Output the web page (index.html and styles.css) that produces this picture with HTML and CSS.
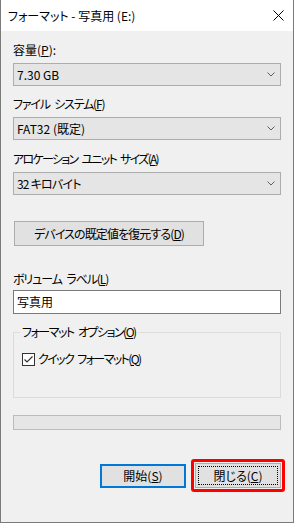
FILE: index.html
```html
<!DOCTYPE html>
<html lang="ja">
<head>
  <meta charset="UTF-8" />
  <title>フォーマット - 写真用 (E:)</title>
  <link rel="stylesheet" href="styles.css">
</head>
<body>
  <div class="window">
    <div class="titlebar">
      <span class="title">フォーマット - 写真用 (E:)</span>
      <svg class="close" width="11" height="11" viewBox="0 0 11 11">
        <path d="M0.5 0.5 L10.5 10.5 M10.5 0.5 L0.5 10.5" stroke="#000" stroke-width="1" fill="none" />
      </svg>
    </div>

    <div class="content">
      <div class="label l1">容量(<u>P</u>):</div>
      <div class="combo">
        <span>7.30 GB</span>
        <svg width="8" height="5" viewBox="0 0 8 5"><polyline points="0.5,0.5 4,4 7.5,0.5" fill="none" stroke="#606060" /></svg>
      </div>

      <div class="label l2">ファイル システム(<u>F</u>)</div>
      <div class="combo">
        <span>FAT32 (既定)</span>
        <svg width="8" height="5" viewBox="0 0 8 5"><polyline points="0.5,0.5 4,4 7.5,0.5" fill="none" stroke="#606060" /></svg>
      </div>

      <div class="label l3">アロケーション ユニット サイズ(<u>A</u>)</div>
      <div class="combo">
        <span class="kana">32 キロバイト</span>
        <svg width="8" height="5" viewBox="0 0 8 5"><polyline points="0.5,0.5 4,4 7.5,0.5" fill="none" stroke="#606060" /></svg>
      </div>

      <div class="btn restore">デバイスの既定値を復元する(<u>D</u>)</div>

      <div class="label l4">ボリューム ラベル(<u>L</u>)</div>
      <div class="textbox">写真用</div>

      <fieldset class="group">
        <legend>フォーマット オプション(<u>O</u>)</legend>
        <div class="check-row">
          <svg class="checkbox" width="13" height="13" viewBox="0 0 13 13">
            <rect x="0.5" y="0.5" width="12" height="12" fill="#fff" stroke="#333" />
            <polyline points="2.5,6.5 5,9 10.5,3.5" fill="none" stroke="#333" stroke-width="1.2" />
          </svg>
          <span class="check-label">クイック フォーマット(<u>Q</u>)</span>
        </div>
      </fieldset>

      <div class="progress"></div>

      <div class="actions">
        <div class="btn default">開始(<u>S</u>)</div>
        <div class="highlight">
          <div class="btn focused"><span class="focus-rect">閉じる(<u>C</u>)</span></div>
        </div>
      </div>
    </div>
  </div>
</body>
</html>
```

FILE: styles.css
```css
* {
  box-sizing: border-box;
}

body {
  margin: 0;
  font-family: "Noto Sans CJK JP", "Noto Sans", sans-serif;
  font-size: 12px;
  font-feature-settings: "palt";
  color: #000;
  background: #f0f0f0;
}

.window {
  width: 294px;
  height: 523px;
  border: 1px solid #7a7a7a;
  border-top: none;
  background: #f0f0f0;
  display: flex;
  flex-direction: column;
}

/* Barre de titre */
.titlebar {
  height: 31px;
  background: #fff;
  display: flex;
  align-items: center;
  justify-content: space-between;
  padding: 0 9px 0 7px;
}

.title {
  line-height: 16px;
}

.close {
  margin-top: -1px;
}

/* Contenu */
.content {
  padding: 0 12px;
  display: flex;
  flex-direction: column;
}

.label {
  line-height: 16px;
  height: 16px;
  margin-top: 10px;
}

.l1 { margin-top: 11px; }
.l2 { letter-spacing: -1.2px; word-spacing: 3px; }
.l3 { margin-top: 11px; letter-spacing: -1.7px; word-spacing: 3px; }
.l4 { margin-top: 25px; letter-spacing: -1.1px; word-spacing: 3px; }

.kana {
  letter-spacing: -0.8px;
}

.combo {
  margin-top: 5px;
  height: 23px;
  background: #e5e5e5;
  border: 1px solid #adadad;
  display: flex;
  align-items: center;
  justify-content: space-between;
  padding: 0 5px 0 3px;
  line-height: 16px;
}

.btn {
  height: 25px;
  background: #e1e1e1;
  border: 1px solid #adadad;
  display: flex;
  align-items: center;
  justify-content: center;
  line-height: 16px;
}

.restore {
  margin-top: 26px;
  margin-left: 1px;
  width: 190px;
  letter-spacing: -0.9px;
}

.textbox {
  margin-top: 3px;
  height: 24px;
  background: #fff;
  border: 1px solid #7a7a7a;
  padding: 0 3px;
  line-height: 21px;
}

/* Groupe options */
.group {
  margin: 10px 0 0;
  border: 1px solid #dcdcdc;
  padding: 0 6px 30px;
  min-width: 0;
}

.group legend {
  padding: 0 2px;
  line-height: 16px;
  letter-spacing: -1.5px;
  word-spacing: 3px;
}

.check-row {
  margin-top: 11px;
  margin-left: 2px;
  display: flex;
  align-items: center;
  gap: 3px;
  line-height: 16px;
}

.check-label {
  letter-spacing: -1.6px;
  word-spacing: 3px;
}

.progress {
  margin-top: 17px;
  height: 15px;
  background: #e6e6e6;
  border: 1px solid #bcbcbc;
}

/* Boutons */
.actions {
  margin-top: 29px;
  margin-right: -4px;
  display: flex;
  justify-content: flex-end;
  align-items: center;
  gap: 5px;
}

.default {
  width: 86px;
  height: 24px;
  border: 2px solid #0078d7;
}

.highlight {
  border: 3px solid #ff0000;
  border-radius: 3px;
  padding: 1px;
}

.focused {
  width: 86px;
  padding: 2px;
}

.focus-rect {
  flex: 1;
  align-self: stretch;
  border: 1px dotted #000;
  display: flex;
  align-items: center;
  justify-content: center;
}
```
